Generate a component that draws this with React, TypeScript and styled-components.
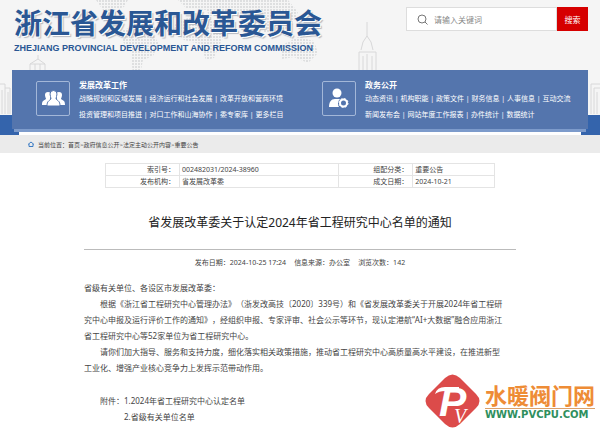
import React from "react";
import styled, { createGlobalStyle } from "styled-components";

const Global = createGlobalStyle`
  * { box-sizing: border-box; }
  html { -webkit-text-size-adjust: none; }
  body {
    margin: 0;
    background: #fff;
    color: #444;
    font-family: "Noto Sans", "Noto Sans CJK SC", sans-serif;
    font-size: 8px;
    overflow-x: hidden;
  }
  h1, h2, h3, p, ul, ol { margin: 0; padding: 0; }
  a { color: inherit; text-decoration: none; }
`;

const Page = styled.div`
  position: relative;
  min-height: 100vh;
  overflow: hidden;
`;

const Header = styled.header`
  position: relative;
  background: #f5f5f5;
`;

const Backdrop = styled.svg`
  position: absolute;
  inset: 0;
  width: 100%;
  height: 100%;
`;

const Masthead = styled.div`
  position: relative;
  display: flex;
  justify-content: space-between;
  align-items: flex-start;
  height: 70px;
  padding: 7px 12px 0 14px;
`;

const Brand = styled.div`
  color: #2a5794;
  white-space: nowrap;
`;

const BrandName = styled.h1`
  font-size: 28px;
  line-height: 32px;
  font-weight: 700;
  text-shadow: 1px 1px 0 #fff, 2px 2px 1px #b5b9c0;
`;

const BrandLatin = styled.p`
  margin-top: 3px;
  font-family: "Liberation Sans", Arial, sans-serif;
  font-size: 9px;
  line-height: 12px;
  font-weight: 700;
`;

const Search = styled.form`
  display: flex;
  width: 182px;
  height: 24px;
`;

const SearchField = styled.label`
  flex: 1;
  display: flex;
  align-items: center;
  gap: 6px;
  padding-left: 10px;
  background: #fff;
  border: 1px solid #ddd;
`;

const SearchInput = styled.input`
  flex: 1;
  min-width: 0;
  padding: 0;
  border: 0;
  outline: 0;
  background: transparent;
  font: inherit;
  font-size: 8px;
  &::placeholder { color: #888; opacity: 1; }
`;

const SearchButton = styled.button`
  width: 37px;
  padding: 0;
  border: 0;
  background: #d60000;
  color: #fff;
  font: inherit;
  font-size: 8px;
`;

const NavZone = styled.div`
  position: relative;
  padding: 0 12px;
  background: linear-gradient(transparent 45px, #3464ac 45px);
`;

const Nav = styled.nav`
  display: grid;
  grid-template-columns: 286fr 290fr;
  height: 59px;
  background: #5475ad;
`;

const NavGroup = styled.section`
  display: flex;
  gap: 9px;
  padding: 8px 0 0 24px;
  color: #fff;
  white-space: nowrap;
`;

const NavIcon = styled.span`
  flex: none;
  display: grid;
  place-items: center;
  width: 34px;
  height: 35px;
  margin-top: 3px;
  border: 1px solid #a3b7d8;
  border-radius: 2px;
`;

const NavTitle = styled.h2`
  font-size: 8px;
  line-height: 13px;
  font-weight: 700;
`;

const NavLinks = styled.p`
  font-size: 7px;
  line-height: 16px;
`;

const NavEdge = styled.div`
  height: 3px;
  margin: 0 2px;
  background: #7d9bcb;
`;

const NavFoot = styled.div`
  height: 3px;
  margin: 0 7px;
  background: #fff;
`;

const Crumbs = styled.nav`
  display: flex;
  align-items: center;
  gap: 4px;
  height: 18px;
  padding-left: 28px;
  background: #ebebeb;
  font-size: 6px;
`;

const Article = styled.main`
  margin: 0 84px;
`;

const InfoTable = styled.table`
  width: calc(100% - 42px);
  margin: 10px 21px 0;
  border-collapse: collapse;
  table-layout: fixed;
  font-size: 7px;
  line-height: 11px;
`;

const InfoLabel = styled.th`
  width: 19%;
  padding: 0 4px 0 0;
  border: 1px solid #e4e4e4;
  font-weight: 400;
  text-align: right;
`;

const InfoValue = styled.td<{ $width: string }>`
  width: ${(p) => p.$width};
  padding: 0 0 0 2px;
  border: 1px solid #e4e4e4;
`;

const Title = styled.h2`
  margin-top: 25px;
  color: #222;
  font-size: 12px;
  line-height: 20px;
  font-weight: 400;
  text-align: center;
`;

const Meta = styled.div`
  display: flex;
  justify-content: center;
  gap: 8px;
  margin-top: 16px;
  padding-top: 7px;
  border-top: 1px solid #bbb;
  font-size: 7px;
  line-height: 12px;
  text-spacing-trim: space-all;
`;

const Body = styled.div`
  margin-top: 11px;
  padding-right: 9px;
  font-size: 8px;
  line-height: 16px;
  text-spacing-trim: space-all;
`;

const Para = styled.p<{ $indent?: boolean }>`
  text-indent: ${(p) => (p.$indent ? "2em" : "0")};
`;

const Attachments = styled.div`
  display: flex;
  margin-top: 17px;
  padding-left: 16px;
`;

const AttachmentList = styled.ul`
  list-style: none;
`;

const SiteMark = styled.a`
  position: absolute;
  right: 5px;
  bottom: 4px;
  display: flex;
  align-items: center;
  gap: 5px;
`;

const MarkName = styled.strong`
  display: block;
  color: #ee8c36;
  font-size: 22px;
  line-height: 26px;
  font-weight: 700;
`;

const MarkUrl = styled.span`
  display: block;
  border-top: 1px solid #dba16a;
  color: #2f8f5e;
  font-family: "DejaVu Sans", sans-serif;
  font-size: 10px;
  line-height: 12px;
  font-weight: 700;
`;

const Skyline = () => (
  <Backdrop viewBox="0 0 600 135" preserveAspectRatio="none" aria-hidden="true">
    <defs>
      <pattern id="dots" width="3" height="3" patternUnits="userSpaceOnUse">
        <rect width="2" height="2" fill="#dedfe0" />
      </pattern>
    </defs>
    <g fill="url(#dots)">
      <path d="M96 0h32l-4 7-10 3-3 6-8-6z" />
      <path d="M123 30l12-4 18 8 6 10-6 12-10 4-4 20-6-3-2-25-8-10z" />
      <path d="M178 0h60l-4 8-10 6-14 2-4-6-20-2z" />
      <path d="M176 22l18-6 22 6 10 10-6 12-6 14-8 2-6-16-16-4-10-10z" />
      <path d="M216 0h72l10 12-6 14-16 8-12-2-6-8-14-4-16-8z" />
      <path d="M282 45l16-8 16 4 4 12-10 10-14-6-12 2z" />
    </g>
    <g fill="none" stroke="#d8d8d9">
      <path d="M30 70v-6l8-5 7 5v6M38 55v4M30 64h15M35 64v6M40 64v6" />
      <path d="M367 22v14M361 50q1-9 6-14q5 5 6 14M359 70v-18h17v18M363 70v-14M367 70v-16M372 70v-14" />
      <path d="M0 84h5v30M2 90v24M5 88h5v26M8 92v22M591 114v-30h9M594 114v-26h6M597 114v-22" />
    </g>
  </Backdrop>
);

const PeopleIcon = () => (
  <svg width="23" height="17" viewBox="0 0 23 17" aria-hidden="true">
    <g fill="#fff">
      <path d="M3 5a3 3 0 0 1 6 0c0 2-1 3-1 4l2 3-2 3H0c0-4 1-4 4-6C4 8 3 7 3 5z" />
      <path d="M20 5a3 3 0 0 0-6 0c0 2 1 3 1 4l-2 3 2 3h8c0-4-1-4-4-6C19 8 20 7 20 5z" />
    </g>
    <path fill="#fff" stroke="#5475ad" d="M8 4a3.500 3.500 0 0 1 7 0c0 2-1 3-1 5 2 2 4 2 4 7H5c0-5 2-5 4-7 0-2-1-3-1-5z" />
  </svg>
);

const OfficerIcon = () => (
  <svg width="20" height="21" viewBox="0 0 20 21" aria-hidden="true">
    <circle cx="8" cy="5" r="4.500" fill="#fff" />
    <path d="M0 19c0-5 2-8 6-8h5a6 6 0 0 0-1 8z" fill="#fff" />
    <circle cx="14.500" cy="15" r="3.500" fill="none" stroke="#fff" strokeWidth="2" />
    <circle cx="14.500" cy="15" r="4.500" fill="none" stroke="#fff" strokeDasharray="2 1.500" />
  </svg>
);

const groups = [
  {
    title: "发展改革工作",
    icon: <PeopleIcon />,
    rows: [
      ["战略规划和区域发展", "经济运行和社会发展", "改革开放和营商环境"],
      ["投资管理和项目推进", "对口工作和山海协作", "委专家库", "更多栏目"],
    ],
  },
  {
    title: "政务公开",
    icon: <OfficerIcon />,
    rows: [
      ["动态资讯", "机构职能", "政策文件", "财务信息", "人事信息", "互动交流"],
      ["新闻发布会", "网站年度工作报表", "办件统计", "数据统计"],
    ],
  },
];

const trail = ["首页", "政府信息公开", "法定主动公开内容", "重要公告"];

export default function App() {
  return (
    <Page lang="zh-CN">
      <Global />
      <Header>
        <Skyline />
        <Masthead>
          <Brand>
            <BrandName>浙江省发展和改革委员会</BrandName>
            <BrandLatin>ZHEJIANG PROVINCIAL DEVELOPMENT AND REFORM COMMISSION</BrandLatin>
          </Brand>
          <Search onSubmit={(e) => e.preventDefault()}>
            <SearchField>
              <svg width="11" height="11" viewBox="0 0 11 11" fill="none" stroke="#777" aria-hidden="true">
                <circle cx="5" cy="5" r="4" />
                <path d="M8 8l2.500 2.500" />
              </svg>
              <SearchInput type="text" placeholder="请输入关键词" aria-label="请输入关键词" />
            </SearchField>
            <SearchButton type="submit">搜索</SearchButton>
          </Search>
        </Masthead>
        <NavZone>
          <Nav>
            {groups.map((g) => (
              <NavGroup key={g.title}>
                <NavIcon>{g.icon}</NavIcon>
                <div>
                  <NavTitle>{g.title}</NavTitle>
                  {g.rows.map((row) => (
                    <NavLinks key={row[0]}>
                      {row.map((label, i) => (
                        <React.Fragment key={label}>
                          {i > 0 && " | "}
                          <a href="#">{label}</a>
                        </React.Fragment>
                      ))}
                    </NavLinks>
                  ))}
                </div>
              </NavGroup>
            ))}
          </Nav>
          <NavEdge />
          <NavFoot />
        </NavZone>
      </Header>
      <Crumbs>
        <svg width="6" height="6" viewBox="0 0 6 6" fill="none" stroke="#3c7cc4" aria-hidden="true">
          <path d="M0 3.500L3 1l3 2.500M1 3v2.500h4V3" />
        </svg>
        <span>
          当前位置：
          {trail.map((label, i) => (
            <React.Fragment key={label}>
              {i > 0 && ">"}
              <a href="#">{label}</a>
            </React.Fragment>
          ))}
        </span>
      </Crumbs>
      <Article>
        <InfoTable>
          <tbody>
            <tr>
              <InfoLabel scope="row">索引号：</InfoLabel>
              <InfoValue $width="41%">002482031/2024-38960</InfoValue>
              <InfoLabel scope="row">组配分类：</InfoLabel>
              <InfoValue $width="21%">重要公告</InfoValue>
            </tr>
            <tr>
              <InfoLabel scope="row">发布机构：</InfoLabel>
              <InfoValue $width="41%">省发展改革委</InfoValue>
              <InfoLabel scope="row">成文日期：</InfoLabel>
              <InfoValue $width="21%">2024-10-21</InfoValue>
            </tr>
          </tbody>
        </InfoTable>
        <Title>省发展改革委关于认定2024年省工程研究中心名单的通知</Title>
        <Meta>
          <span>发布日期：2024-10-25 17:24</span>
          <span>信息来源：办公室</span>
          <span>浏览次数：142</span>
        </Meta>
        <Body>
          <Para>省级有关单位、各设区市发展改革委：</Para>
          <Para $indent>
            根据《浙江省工程研究中心管理办法》（浙发改高技〔2020〕339号）和《省发展改革委关于开展2024年省工程研究中心申报及运行评价工作的通知》，经组织申报、专家评审、社会公示等环节，现认定港航“AI+大数据”融合应用浙江省工程研究中心等52家单位为省工程研究中心。
          </Para>
          <Para $indent>
            请你们加大指导、服务和支持力度，细化落实相关政策措施，推动省工程研究中心高质量高水平建设，在推进新型工业化、增强产业核心竞争力上发挥示范带动作用。
          </Para>
          <Attachments>
            <span>附件：</span>
            <AttachmentList>
              <li><a href="#">1.2024年省工程研究中心认定名单</a></li>
              <li><a href="#">2.省级有关单位名单</a></li>
            </AttachmentList>
          </Attachments>
        </Body>
      </Article>
      <SiteMark href="#">
        <svg width="55" height="54" viewBox="0 0 55 54" aria-hidden="true">
          <path d="M20 4Q27.500-3 35 4L51 20Q58 27 51 34L35 50Q27.500 57 20 50L4 34Q-3 27 4 20Z" fill="#dc4b4a" />
          <path d="M10 20Q12 13 20 13H34V17H20Q14 17 10 20Z" fill="#fff" />
          <text x="14" y="42" fill="#fff" fontFamily="Liberation Sans" fontWeight="700" fontStyle="italic" fontSize="41">P</text>
          <text x="29" y="49" fill="#fff" fontFamily="Liberation Serif" fontStyle="italic" fontSize="20">V</text>
        </svg>
        <span>
          <MarkName>水暖阀门网</MarkName>
          <MarkUrl>WWW.PVCPU.COM</MarkUrl>
        </span>
      </SiteMark>
    </Page>
  );
}
